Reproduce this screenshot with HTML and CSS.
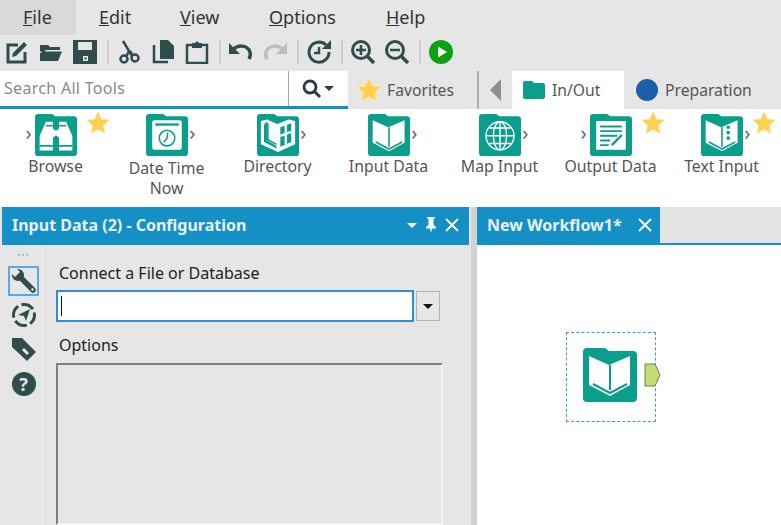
FILE: index.html
```html
<!DOCTYPE html>
<html lang="en">
<head>
    <meta charset="UTF-8">
    <meta name="viewport" content="width=device-width, initial-scale=1.0">
    <title>New Workflow1*</title>
    <link rel="stylesheet" href="styles.css">
</head>
<body>
    <!-- Shared icons -->
    <svg class="defs" width="0" height="0">
        <symbol id="folder" viewBox="0 0 54 54">
            <path fill="#0a9e8c" d="M4 0h18l4 3h24a4 4 0 0 1 4 4v43a4 4 0 0 1-4 4H4a4 4 0 0 1-4-4V4a4 4 0 0 1 4-4z"/>
        </symbol>
        <symbol id="star" viewBox="0 0 24 24">
            <path fill="#fdd14e" stroke="#fbe39a" stroke-width="1" d="M12 1l3.3 7.2 7.7.9-5.7 5.3 1.5 7.8L12 18.3l-6.8 3.9 1.5-7.8L1 9.1l7.7-.9z"/>
        </symbol>
        <symbol id="book" viewBox="0 0 54 54">
            <use href="#folder" width="54" height="54"/>
            <path fill="#fff" d="M6 8l20 9 21-9v29L27 48 6 37z"/>
            <path fill="none" stroke="#0a9e8c" stroke-width="2" d="M27 17v25M10 36l17 9 17-9"/>
        </symbol>
        <symbol id="binoculars" viewBox="0 0 54 54">
            <use href="#folder" width="54" height="54"/>
            <path fill="#fff" d="M14 10h9v8l2 3v9h-2v17H6V28zM40 10h-9v8l-2 3v9h2v17h17V28zM25 21h4v7h-4z"/>
            <path stroke="#0a9e8c" stroke-width="2" d="M6 41h17M31 41h17M14 15h9M31 15h9"/>
        </symbol>
        <symbol id="clock" viewBox="0 0 54 54">
            <use href="#folder" width="54" height="54"/>
            <rect x="8" y="8" width="38" height="38" rx="3" fill="#fff"/>
            <rect x="12" y="12" width="30" height="3" fill="#0a9e8c"/>
            <g fill="none" stroke="#0a9e8c" stroke-width="2">
                <circle cx="27" cy="31" r="10"/>
                <path d="M28 24l-1 7-4 5"/>
            </g>
        </symbol>
        <symbol id="directory" viewBox="0 0 54 54">
            <use href="#folder" width="54" height="54"/>
            <path fill="#fff" d="M5 9l8-2 13 6 15-6 8 2v30L27 49 5 39z"/>
            <path fill="#0a9e8c" d="M11 11l2-1v24l12 7v3L9 36V14zM30 17l14-5v24l-14 6z"/>
            <path stroke="#fff" stroke-width="3" d="M37 12v27M30 28l14-5"/>
            <path fill="none" stroke="#0a9e8c" stroke-width="2" d="M14 12v21l11 6"/>
        </symbol>
        <symbol id="globe" viewBox="0 0 54 54">
            <use href="#folder" width="54" height="54"/>
            <g fill="none" stroke="#fff" stroke-width="1.8">
                <circle cx="27" cy="28" r="18"/>
                <ellipse cx="27" cy="28" rx="8.5" ry="18"/>
                <path d="M27 10v36M9 28h36M12 18h30M12 38h30"/>
            </g>
        </symbol>
        <symbol id="output" viewBox="0 0 54 54">
            <use href="#folder" width="54" height="54"/>
            <rect x="8" y="9" width="38" height="37" fill="#fff"/>
            <path stroke="#0a9e8c" stroke-width="2.5" d="M13 16h28M13 22h28M13 28h22M13 34h13M13 40h11"/>
            <path stroke="#fff" stroke-width="2" d="M27 42l15-15"/>
            <path stroke="#0a9e8c" stroke-width="3" d="M28 40l13-13"/>
        </symbol>
        <symbol id="textinput" viewBox="0 0 54 54">
            <use href="#folder" width="54" height="54"/>
            <path fill="#fff" d="M6 8l20 9 21-9v29L27 48 6 37z"/>
            <path fill="none" stroke="#0a9e8c" stroke-width="2" d="M27 17v25M10 36l17 9 17-9"/>
            <path fill="#0a9e8c" d="M33 15h4v4h-4zM33 22h4v4h-4zM33 29h4v4h-4z"/>
        </symbol>
    </svg>

    <div class="app">
        <nav class="menubar">
            <a class="menu-item active"><u>F</u>ile</a>
            <a class="menu-item edit"><u>E</u>dit</a>
            <a class="menu-item view"><u>V</u>iew</a>
            <a class="menu-item options"><u>O</u>ptions</a>
            <a class="menu-item"><u>H</u>elp</a>
        </nav>

        <div class="toolbar">
            <span class="tool-btn"><svg viewBox="0 0 24 24"><path fill="none" stroke="#2e4d4c" stroke-width="3" d="M13 5H3v17h17V12"/><path fill="#2e4d4c" d="M8 13L19 2l3 3-11 11-4 1z"/></svg></span>
            <span class="tool-btn"><svg viewBox="0 0 24 24"><path fill="#2e4d4c" d="M1 5h8l2 2h10v3H7l-3 3-3-2zM1 13l5-1.500h17L19 21H1z"/></svg></span>
            <span class="tool-btn"><svg viewBox="0 0 24 24"><path fill="#2e4d4c" d="M0 0h24v24H0z"/><path fill="#e6e6e6" d="M5 2h14v8H5zM10 16h5v5h-5z"/><path fill="#2e4d4c" d="M11.500 17.500h2v2h-2z"/></svg></span>
            <span class="sep"></span>
            <span class="tool-btn"><svg viewBox="0 0 24 24"><g fill="none" stroke="#2e4d4c" stroke-width="2.500"><circle cx="7" cy="19" r="3.500"/><circle cx="18" cy="18" r="3.500"/><path d="M6 1l9 15M15 14l-2-3M9.500 16L12 11"/></g></svg></span>
            <span class="tool-btn"><svg viewBox="0 0 24 24"><path fill="#2e4d4c" d="M9 0h8l6 6v13H9z"/><path fill="none" stroke="#2e4d4c" stroke-width="2.500" d="M3 5v17h14"/></svg></span>
            <span class="tool-btn"><svg viewBox="0 0 24 24"><path fill="none" stroke="#2e4d4c" stroke-width="2.500" d="M7 5H2v18h20V5h-5"/><path fill="#2e4d4c" d="M7 3h3l2-2 2 2h3v5H7z"/></svg></span>
            <span class="sep"></span>
            <span class="tool-btn"><svg viewBox="0 0 24 24"><path fill="none" stroke="#2e4d4c" stroke-width="3.500" d="M4 10c4-5 14-6 17 2 1 3 0 5-1 7"/><path fill="#2e4d4c" d="M0 3v11h11z"/></svg></span>
            <span class="tool-btn"><svg viewBox="0 0 24 24"><path fill="none" stroke="#bdbdbd" stroke-width="3.500" d="M20 10C16 5 6 4 3 12c-1 3 0 5 1 7"/><path fill="#bdbdbd" d="M24 3v11H13z"/></svg></span>
            <span class="sep"></span>
            <span class="tool-btn"><svg viewBox="0 0 24 24"><path fill="none" stroke="#2e4d4c" stroke-width="3" d="M19 5A10 10 0 1 0 22 12"/><path fill="#2e4d4c" d="M24 0v9h-9z"/><path fill="none" stroke="#2e4d4c" stroke-width="2.500" d="M12 7v6H7"/></svg></span>
            <span class="sep"></span>
            <span class="tool-btn"><svg viewBox="0 0 24 24"><circle cx="10" cy="10" r="8.500" fill="none" stroke="#2e4d4c" stroke-width="3"/><path stroke="#2e4d4c" stroke-width="3.500" d="M16 16l7 7"/><path stroke="#2e4d4c" stroke-width="2.500" d="M5 10h10M10 5v10"/></svg></span>
            <span class="tool-btn"><svg viewBox="0 0 24 24"><circle cx="10" cy="10" r="8.500" fill="none" stroke="#2e4d4c" stroke-width="3"/><path stroke="#2e4d4c" stroke-width="3.500" d="M16 16l7 7"/><path stroke="#2e4d4c" stroke-width="2.500" d="M5 10h10"/></svg></span>
            <span class="sep"></span>
            <span class="tool-btn"><svg viewBox="0 0 24 24"><circle cx="12" cy="12" r="12" fill="#0aa30f"/><path fill="#fff" d="M9 6.500l9 5.500-9 5.500z"/></svg></span>
        </div>

        <div class="search-row">
            <div class="search">
                <span class="search-input">Search All Tools</span>
                <span class="search-btn">
                    <svg width="20" height="20" viewBox="0 0 20 20"><circle cx="8" cy="8" r="6" fill="none" stroke="#2b3b3b" stroke-width="2.800"/><path stroke="#2b3b3b" stroke-width="3" d="M12 12l6 6"/></svg>
                    <i class="caret"></i>
                </span>
            </div>
            <div class="tab favorites">
                <svg class="tab-star" width="26" height="26"><use href="#star"/></svg>
                Favorites
            </div>
            <div class="tab-arrow"><i></i></div>
            <div class="tab current">
                <svg width="22" height="18" viewBox="0 0 22 18"><path fill="#0a9e8c" d="M2 0h7l2 2h9a2 2 0 0 1 2 2v12a2 2 0 0 1-2 2H2a2 2 0 0 1-2-2V2a2 2 0 0 1 2-2z"/></svg>
                In/Out
            </div>
            <div class="tab preparation"><i class="dot"></i>Preparation</div>
        </div>

        <div class="palette">
            <div class="tool">
                <div class="tool-icon"><i class="chev left">&rsaquo;</i><svg width="42" height="42"><use href="#binoculars"/></svg><svg class="fav" width="24" height="24"><use href="#star"/></svg></div>
                <span>Browse</span>
            </div>
            <div class="tool two-line">
                <div class="tool-icon"><svg width="42" height="42"><use href="#clock"/></svg><i class="chev right">&rsaquo;</i></div>
                <span>Date Time<br>Now</span>
            </div>
            <div class="tool">
                <div class="tool-icon"><svg width="42" height="42"><use href="#directory"/></svg><i class="chev right">&rsaquo;</i></div>
                <span>Directory</span>
            </div>
            <div class="tool">
                <div class="tool-icon"><svg width="42" height="42"><use href="#book"/></svg><i class="chev right">&rsaquo;</i></div>
                <span>Input Data</span>
            </div>
            <div class="tool">
                <div class="tool-icon"><svg width="42" height="42"><use href="#globe"/></svg><i class="chev right">&rsaquo;</i></div>
                <span>Map Input</span>
            </div>
            <div class="tool">
                <div class="tool-icon"><i class="chev left">&rsaquo;</i><svg width="42" height="42"><use href="#output"/></svg><svg class="fav" width="24" height="24"><use href="#star"/></svg></div>
                <span>Output Data</span>
            </div>
            <div class="tool">
                <div class="tool-icon"><svg width="42" height="42"><use href="#textinput"/></svg><i class="chev right">&rsaquo;</i><svg class="fav" width="24" height="24"><use href="#star"/></svg></div>
                <span>Text Input</span>
            </div>
        </div>

        <div class="workspace">
            <section class="config">
                <header class="config-title">
                    <span>Input Data (2) - Configuration</span>
                    <span class="title-controls">
                        <i class="title-caret"></i>
                        <svg width="14" height="16" viewBox="0 0 14 16"><path fill="#fff" d="M3 0h8v1.500H9.500V8L12 10v1.500H8L7 16l-1-4.500H2V10l2.500-2V1.500H3z"/></svg>
                        <svg width="14" height="14" viewBox="0 0 14 14"><path stroke="#fff" stroke-width="1.800" d="M1 1l12 12M13 1L1 13"/></svg>
                    </span>
                </header>
                <div class="config-body">
                    <div class="rail">
                        <div class="grip">&bull;&bull;&bull;</div>
                        <span class="rail-btn selected">
                            <svg width="26" height="26" viewBox="0 0 26 26"><path stroke="#2e4d4c" stroke-width="5.500" stroke-linecap="round" d="M8 8l14 14"/><circle cx="7" cy="7" r="6" fill="#2e4d4c"/><path fill="#e6e6e6" d="M-1 4L4-1l5 5-5 5z"/><circle cx="21.500" cy="21.500" r="1.300" fill="#e6e6e6"/></svg>
                        </span>
                        <span class="rail-btn">
                            <svg width="26" height="26" viewBox="0 0 26 26"><circle cx="13" cy="13" r="10.500" fill="none" stroke="#2e4d4c" stroke-width="3" stroke-dasharray="13 3.500" stroke-dashoffset="3"/><path fill="#2e4d4c" d="M19 7l-4 12-2-5-6-1z"/></svg>
                        </span>
                        <span class="rail-btn">
                            <svg width="26" height="26" viewBox="0 0 26 26"><path fill="#2e4d4c" d="M1 2h10l14 14-9 9L1 11z"/><path stroke="#e6e6e6" stroke-width="3" d="M12 13l5 5"/></svg>
                        </span>
                        <span class="rail-btn help-btn"><i class="help">?</i></span>
                    </div>
                    <div class="form">
                        <label>Connect a File or Database</label>
                        <div class="combo">
                            <div class="combo-input"><i class="text-cursor"></i></div>
                            <div class="combo-btn"><i></i></div>
                        </div>
                        <label class="options-label">Options</label>
                        <div class="options-box"></div>
                    </div>
                </div>
            </section>

            <section class="canvas-pane">
                <div class="canvas-tabs">
                    <div class="canvas-tab">
                        <span>New Workflow1*</span>
                        <svg width="14" height="14" viewBox="0 0 14 14"><path stroke="#fff" stroke-width="1.800" d="M1 1l12 12M13 1L1 13"/></svg>
                    </div>
                </div>
                <div class="canvas">
                    <div class="node">
                        <svg width="54" height="54"><use href="#book"/></svg>
                        <svg class="anchor" width="17" height="24" viewBox="0 0 17 24"><path fill="#c8da72" stroke="#5f8a4c" d="M1 1h10l5 11-5 11H1z"/></svg>
                    </div>
                </div>
            </section>
        </div>
    </div>
</body>
</html>
```

FILE: styles.css
```css
body {
    font-family: "Noto Sans", "Open Sans", sans-serif;
    background-color: #e6e6e6;
    margin: 0;
    padding: 0;
    overflow: hidden;
}
i {
    font-style: normal;
}
.defs {
    position: absolute;
}
.app {
    width: 781px;
    height: 525px;
    display: flex;
    flex-direction: column;
    overflow: hidden;
}

/* Menu */
.menubar {
    display: flex;
    height: 35px;
    font-size: 18px;
    line-height: 35px;
    color: #333;
}
.menu-item {
    padding: 0 23px;
    width: 30px;
    white-space: nowrap;
}
.menu-item.active {
    background: #d9d9d9;
}
.menu-item.edit {
    width: 35px;
}
.menu-item.view {
    width: 43px;
}
.menu-item.options {
    width: 71px;
}

/* Toolbar */
.toolbar {
    display: flex;
    align-items: center;
    height: 36px;
    padding-bottom: 2px;
    box-sizing: border-box;
}
.tool-btn {
    width: 34px;
    display: flex;
    justify-content: center;
}
.tool-btn svg {
    width: 24px;
    height: 24px;
}
.sep {
    width: 2px;
    height: 24px;
    margin: 0 3px 0 5px;
    background: #cfcfcf;
}

/* Search + tabs */
.search-row {
    display: flex;
    height: 38px;
}
.search {
    width: 348px;
    display: flex;
    background: #fff;
    border-bottom: 3px solid #1590c6;
    box-sizing: border-box;
}
.search-input {
    width: 284px;
    padding-left: 4px;
    border-right: 1px solid #a8a8a8;
    font-size: 16px;
    letter-spacing: 0.3px;
    line-height: 35px;
    color: #8a8a8a;
}
.search-btn {
    display: flex;
    align-items: center;
    gap: 2px;
    padding-left: 13px;
}
.caret {
    border-left: 5px solid transparent;
    border-right: 5px solid transparent;
    border-top: 5px solid #2b3b3b;
}
.tab {
    display: flex;
    align-items: center;
    font-size: 15.7px;
    color: #555;
}
.favorites {
    width: 131px;
    gap: 5px;
    padding-left: 8px;
    box-sizing: border-box;
    border-right: 2px solid #b0b0b0;
}
.tab-arrow {
    width: 33px;
    display: flex;
    align-items: center;
    justify-content: center;
    border-right: 2px solid #fff;
}
.tab-arrow i {
    border-top: 11px solid transparent;
    border-bottom: 11px solid transparent;
    border-right: 11px solid #8c9090;
}
.current {
    width: 110px;
    gap: 7px;
    padding-left: 9px;
    box-sizing: border-box;
    background: #fff;
}
.preparation {
    padding-left: 12px;
    gap: 7px;
}
.dot {
    width: 22px;
    height: 22px;
    border-radius: 50%;
    background: #1a5fa8;
}

/* Tool palette */
.palette {
    display: grid;
    grid-template-columns: repeat(7, 111px);
    height: 98px;
    padding-top: 5px;
    box-sizing: border-box;
    background: #fff;
}
.tool {
    display: flex;
    flex-direction: column;
    align-items: center;
    font-size: 15.8px;
    line-height: 20px;
    color: #555;
    text-align: center;
    white-space: nowrap;
}
.tool-icon {
    position: relative;
    width: 42px;
    height: 42px;
}
.two-line .tool-icon {
    margin-bottom: 2px;
}
.chev {
    position: absolute;
    top: 7px;
    font-size: 20px;
    line-height: 24px;
    color: #666;
}
.chev.left {
    left: -9px;
}
.chev.right {
    right: -8px;
}
.fav {
    position: absolute;
    top: -3px;
    left: 51px;
}

/* Lower area */
.workspace {
    flex: 1;
    display: flex;
    min-height: 0;
}
.config {
    width: 467px;
    margin-left: 2px;
    display: flex;
    flex-direction: column;
}
.config-title {
    height: 38px;
    display: flex;
    align-items: center;
    justify-content: space-between;
    padding: 0 10px 2px;
    box-sizing: border-box;
    background: #1590c6;
    color: #e8f3f9;
    font-size: 16px;
    font-weight: bold;
}
.title-controls {
    display: flex;
    align-items: center;
    gap: 7px;
}
.title-caret {
    border-left: 5px solid transparent;
    border-right: 5px solid transparent;
    border-top: 5px solid #fff;
}
.config-body {
    flex: 1;
    display: flex;
}
.rail {
    width: 41px;
    box-sizing: border-box;
    border-right: 1px solid #f0f0f0;
    display: flex;
    flex-direction: column;
    align-items: center;
    gap: 4px;
    padding-left: 3px;
}
.grip {
    height: 15px;
    margin-top: 2px;
    font-size: 9px;
    line-height: 15px;
    letter-spacing: 1px;
    color: #b5b5b5;
}
.rail-btn {
    width: 31px;
    height: 30px;
    display: flex;
    align-items: center;
    justify-content: center;
    box-sizing: border-box;
}
.rail-btn.selected {
    border: 2px solid #5aa9f0;
}
.help-btn {
    margin-top: 1px;
}
.help {
    width: 24px;
    height: 24px;
    border-radius: 50%;
    background: #2e4d4c;
    color: #e6e6e6;
    font-size: 18px;
    font-weight: bold;
    line-height: 24px;
    text-align: center;
}
.form {
    flex: 1;
    padding: 17px 0 0 13px;
    display: flex;
    flex-direction: column;
    font-size: 16px;
    color: #222;
}
.form label {
    padding-left: 3px;
    line-height: 22px;
}
.combo {
    display: flex;
    align-items: center;
    gap: 2px;
    margin-top: 6px;
}
.combo-input {
    width: 358px;
    height: 32px;
    box-sizing: border-box;
    border: 2px solid #2f8fe0;
    background: #fff;
    display: flex;
    align-items: center;
    padding-left: 3px;
}
.text-cursor {
    width: 1px;
    height: 20px;
    background: #111;
}
.combo-btn {
    width: 24px;
    height: 30px;
    box-sizing: border-box;
    border: 1px solid #b4b4b4;
    display: flex;
    align-items: center;
    justify-content: center;
}
.combo-btn i {
    border-left: 5px solid transparent;
    border-right: 5px solid transparent;
    border-top: 5px solid #111;
}
.options-label {
    margin-top: 12px;
}
.options-box {
    width: 387px;
    flex: 1;
    margin-top: 7px;
    box-sizing: border-box;
    border: 2px solid;
    border-color: #808080 #f6f6f6 #f6f6f6 #808080;
}

/* Canvas */
.canvas-pane {
    margin-left: 2px;
    padding-left: 6px;
    flex: 1;
    display: flex;
    flex-direction: column;
    background: linear-gradient(to right, #d2d2d2 6px, transparent 6px);
}
.canvas-tabs {
    height: 36px;
    background: #e3e3e3;
    border-bottom: 2px solid #1590c6;
}
.canvas-tab {
    width: 183px;
    height: 36px;
    box-sizing: border-box;
    padding: 0 8px 0 10px;
    display: flex;
    align-items: center;
    justify-content: space-between;
    background: #1590c6;
    color: #e8f3f9;
    font-size: 16px;
    font-weight: bold;
}
.canvas {
    flex: 1;
    position: relative;
    background: #fff;
}
.node {
    position: absolute;
    left: 89px;
    top: 87px;
    width: 90px;
    height: 90px;
    box-sizing: border-box;
    border: 1px dashed #3b94ee;
    padding: 15px 0 0 16px;
}
.anchor {
    position: absolute;
    left: 77px;
    top: 30px;
}
```
